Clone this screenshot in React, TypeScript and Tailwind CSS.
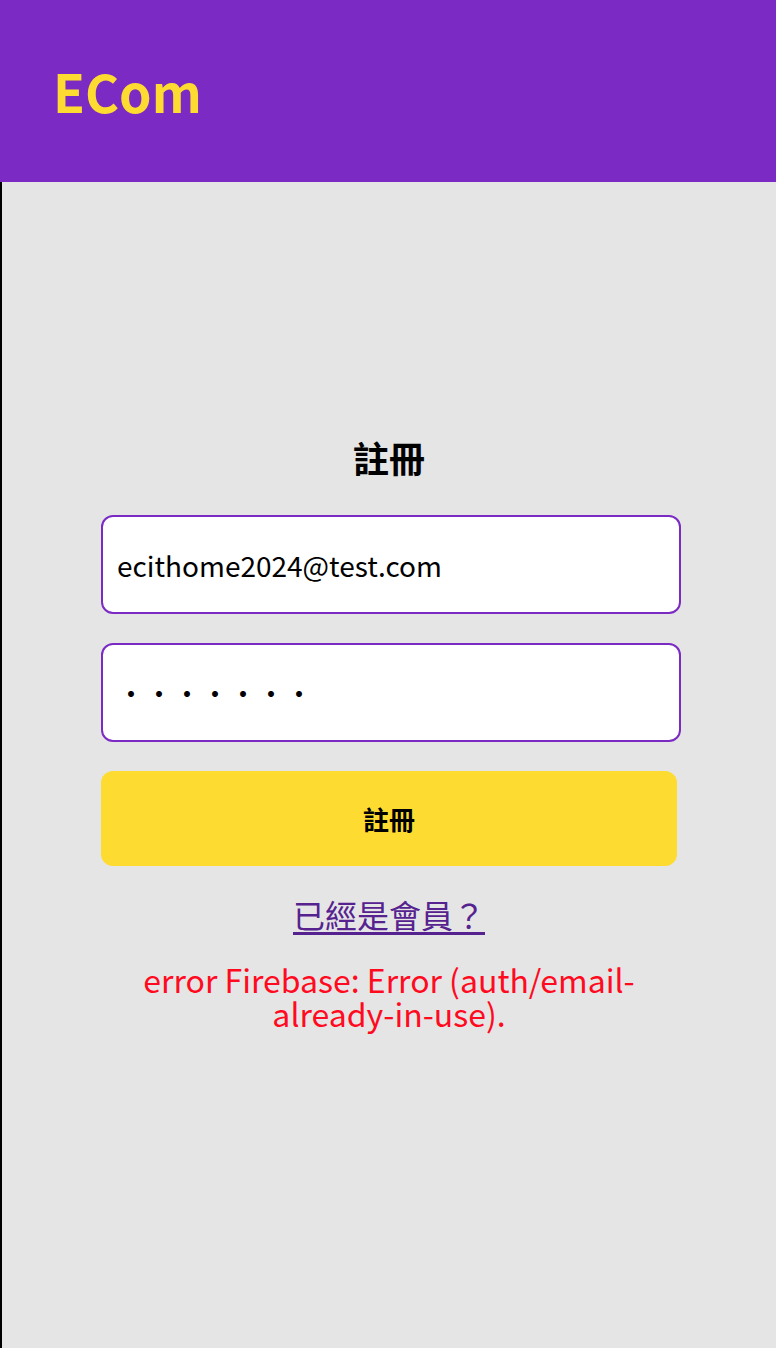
import React from "react";

const App = () => {
  return (
    <div className="min-h-screen bg-[#e5e5e5] font-['Noto_Sans_CJK_TC','Noto_Sans',sans-serif]">
      {/* Header */}
      <header className="h-[182px] bg-[#7b2bc3] flex items-center px-[53px]">
        <h1 className="text-[52px] font-bold text-[#fddb30] leading-none">ECom</h1>
      </header>

      {/* Sign up form */}
      <main className="border-l-2 border-black h-[1166px] pt-[249px]">
        <div className="w-[576px] mx-auto flex flex-col">
          <h2 className="text-center text-[36px] font-bold text-black leading-[52px]">註冊</h2>

          <input
            type="email"
            defaultValue="ecithome2024@test.com"
            className="mt-[32px] w-[580px] h-[99px] rounded-xl border-2 border-[#7b2bc3] bg-white px-[14px] text-[28px] text-black outline-none"
          />
          <input
            type="password"
            defaultValue="1234567"
            className="mt-[29px] w-[580px] h-[99px] rounded-xl border-2 border-[#7b2bc3] bg-white px-[14px] text-[28px] text-black outline-none"
          />

          <button className="mt-[29px] h-[95px] rounded-xl bg-[#fddb30] text-[26px] font-bold text-black">
            註冊
          </button>

          <a href="#" className="mt-[26px] self-center text-[32px] leading-[44px] text-[#55228f] underline underline-offset-4">
            已經是會員？
          </a>

          <p className="mt-[26px] px-[40px] text-center text-[32px] leading-[34px] text-[#ff0a1e]">
            error Firebase: Error (auth/email-already-in-use).
          </p>
        </div>
      </main>
    </div>
  );
};

export default App;
